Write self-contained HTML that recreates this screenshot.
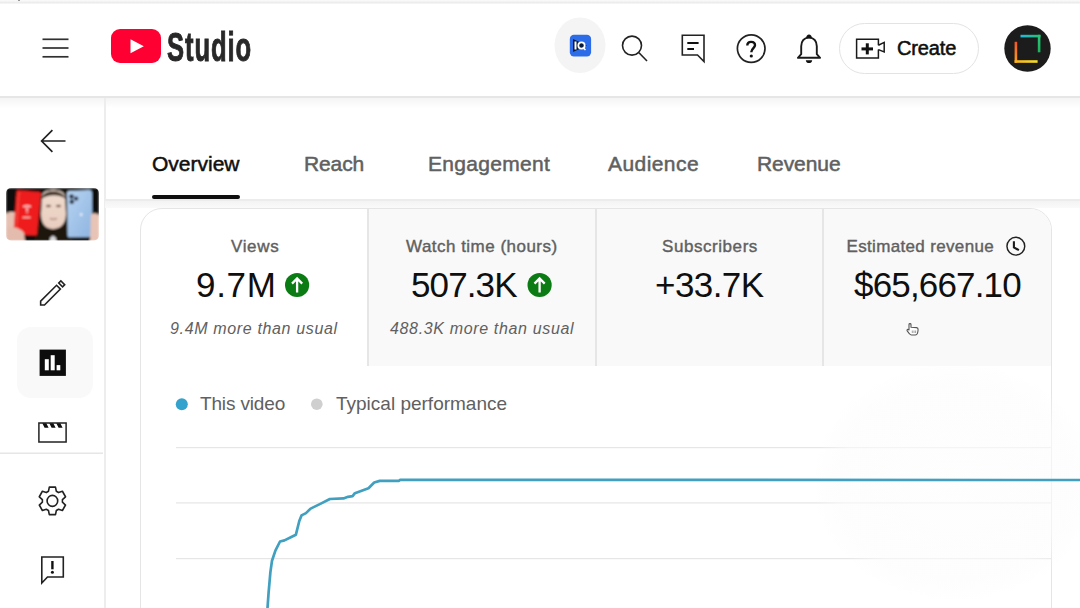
<!DOCTYPE html>
<html><head><meta charset="utf-8">
<style>
*{margin:0;padding:0;box-sizing:border-box}
html,body{width:1080px;height:608px;overflow:hidden;background:#fff;font-family:"Liberation Sans",sans-serif;color:#0f0f0f}
.a{position:absolute}
.t{position:absolute;white-space:nowrap;line-height:1}
#topline{left:0;top:0;width:1080px;height:3.6px;background:linear-gradient(#fbfbfb,#f2f2f2 40%,#ebebeb 70%,#fafafa)}
#hdrline{left:0;top:96px;width:1080px;height:2px;background:#e6e6e6}
#hdrshadow{left:0;top:98px;width:1080px;height:10px;background:linear-gradient(#f4f4f4,rgba(255,255,255,0))}
#sideline{left:103.5px;top:98px;width:2px;height:510px;background:#ededed}
#tabline{left:105px;top:199px;width:975px;height:2px;background:#ececec}
#tabshadow{left:105px;top:201px;width:975px;height:7px;background:linear-gradient(#f3f3f3,#fafafa)}
.tab{font-size:21px;color:#606060;-webkit-text-stroke:0.5px currentColor;letter-spacing:0px}
.lbl{font-size:17px;color:#606060;-webkit-text-stroke:0.4px currentColor;letter-spacing:0.2px}
.big{font-size:35px;color:#0f0f0f}
.sub{font-size:16px;color:#606060;font-style:italic;letter-spacing:0.65px}
.leg{font-size:19px;color:#606060}
</style></head><body>
<div class="a" id="topline"></div>
<div class="a" style="left:18.2px;top:0;width:2.2px;height:1.4px;background:#999"></div>

<!-- header -->
<svg class="a" style="left:0;top:0" width="1080" height="96">
  <g stroke="#303030" stroke-width="1.7" fill="none">
    <line x1="42.5" y1="39.3" x2="68.5" y2="39.3"/>
    <line x1="42.5" y1="48" x2="68.5" y2="48"/>
    <line x1="42.5" y1="56.8" x2="68.5" y2="56.8"/>
  </g>
  <rect x="111" y="29" width="50" height="34" rx="9" fill="#ff0033"/>
  <path d="M130.5 39.3 L143.8 46.3 L130.5 53.3 Z" fill="#fff"/>
  <!-- IQ -->
  <ellipse cx="580" cy="45.3" rx="25.5" ry="27.8" fill="#f4f4f4"/>
  <rect x="569.8" y="34.7" width="21.3" height="21.8" rx="4.2" fill="#2c6ce8"/>
  <path d="M573 39 L587 45.5 L573 52 Z" fill="#0a1a3a"/>
  <rect x="574.5" y="41.5" width="2" height="8" fill="#fff"/>
  <circle cx="581.5" cy="45.5" r="3.2" fill="none" stroke="#fff" stroke-width="1.8"/>
  <line x1="583" y1="47.5" x2="585.5" y2="50" stroke="#fff" stroke-width="1.5"/>
  <!-- search -->
  <circle cx="632" cy="45.6" r="9.5" fill="none" stroke="#222" stroke-width="1.6"/>
  <line x1="639" y1="52.8" x2="647" y2="61" stroke="#222" stroke-width="1.6"/>
  <!-- feedback -->
  <path d="M682.3 35.2 H704 V61.5 L697.5 55 H682.3 Z" fill="none" stroke="#222" stroke-width="1.6" stroke-linejoin="miter"/>
  <line x1="687.3" y1="43" x2="698.6" y2="43" stroke="#111" stroke-width="2"/>
  <line x1="687.3" y1="49" x2="694" y2="49" stroke="#111" stroke-width="2"/>
  <!-- help -->
  <circle cx="751.2" cy="48.6" r="13.8" fill="none" stroke="#222" stroke-width="1.7"/>
  <path d="M747.3 45.6 C747.3 43 749 41.9 751.1 41.9 C753.4 41.9 755 43.2 755 45.3 C755 47.9 751.6 48.4 751.4 51.8 V52.3" fill="none" stroke="#111" stroke-width="2.4"/>
  <circle cx="751.3" cy="56" r="1.6" fill="#111"/>
  <!-- bell -->
  <path d="M809 37.6 C803.8 37.6 801.2 41.7 801.2 46.2 V54.2 L797.9 57.8 H820.1 L816.8 54.2 V46.2 C816.8 41.7 814.2 37.6 809 37.6 Z" fill="none" stroke="#1a1a1a" stroke-width="1.9" stroke-linejoin="round"/>
  <path d="M806.2 38.2 C806 33.4 812 33.4 811.8 38.2 Z" fill="#111"/>
  <path d="M805.8 60.2 C806 64 812 64 812.2 60.2 Z" fill="#111"/>
  <!-- create -->
  <rect x="839.5" y="23.5" width="139" height="50" rx="25" fill="#fff" stroke="#e3e3e3" stroke-width="1"/>
  <path d="M878.4 45.2 V39.2 H856.6 V58 H878.4 V49.6" fill="none" stroke="#1a1a1a" stroke-width="1.5"/>
  <path d="M878.4 45.2 L884.2 42.4 V52 L878.4 49.6" fill="none" stroke="#1a1a1a" stroke-width="1.5" stroke-linejoin="miter"/>
  <line x1="861.5" y1="48.9" x2="873" y2="48.9" stroke="#111" stroke-width="3"/>
  <line x1="867.3" y1="43.3" x2="867.3" y2="54.4" stroke="#111" stroke-width="3"/>
  <!-- avatar -->
  <defs>
    <linearGradient id="g1" x1="0" y1="0" x2="1" y2="0"><stop offset="0" stop-color="#22b8e0"/><stop offset="1" stop-color="#1fc46a"/></linearGradient>
    <linearGradient id="g2" x1="0" y1="0" x2="0" y2="1"><stop offset="0" stop-color="#2bc77a"/><stop offset="1" stop-color="#1db35a"/></linearGradient>
    <linearGradient id="g3" x1="0" y1="0" x2="0" y2="1"><stop offset="0" stop-color="#f2542a"/><stop offset="1" stop-color="#f7a31f"/></linearGradient>
    <linearGradient id="g4" x1="0" y1="0" x2="1" y2="0"><stop offset="0" stop-color="#f8b11e"/><stop offset="1" stop-color="#f3df2a"/></linearGradient>
  </defs>
  <circle cx="1027.5" cy="48.5" r="23.2" fill="#1c1c1c"/>
  <rect x="1020.5" y="34.8" width="20" height="2.6" fill="url(#g1)"/>
  <rect x="1037.8" y="34.8" width="2.6" height="17.5" fill="url(#g2)"/>
  <rect x="1014.6" y="41.8" width="2.6" height="21" fill="url(#g3)"/>
  <rect x="1014.6" y="60.2" width="23" height="2.6" fill="url(#g4)"/>
</svg>
<div class="t" id="studio" style="left:167px;top:27px;font-size:40px;font-weight:bold;color:#282828;transform:scaleX(0.64);transform-origin:0 0;letter-spacing:1.4px;-webkit-text-stroke:0.9px #282828">Studio</div>
<div class="t" id="create" style="left:897px;top:38px;font-size:20px;color:#0f0f0f;-webkit-text-stroke:0.55px currentColor;letter-spacing:-0.15px">Create</div>

<div class="a" id="hdrline"></div>
<div class="a" id="hdrshadow"></div>
<div class="a" id="sideline"></div>

<!-- sidebar -->
<svg class="a" style="left:0;top:97px" width="103" height="511">
  <g transform="translate(0,-97)">
  <path d="M52.4 130.2 L41.6 141 L52.4 151.8 M41.6 141 H65.5" fill="none" stroke="#222" stroke-width="1.7"/>
  <!-- pencil -->
  <g transform="translate(40.65,305) rotate(-45)" fill="none" stroke="#222" stroke-width="1.6" stroke-linejoin="miter">
    <path d="M0 0 L2.7 -2.7 H25.2 V2.7 H2.7 Z"/>
    <rect x="28.3" y="-2.7" width="3" height="5.4"/>
  </g>
  <rect x="17" y="327" width="76" height="71" rx="14" fill="#f9f9f9"/>
  <rect x="39.6" y="349.6" width="26.3" height="26.3" fill="#0d0d0d"/>
  <rect x="44.8" y="359.2" width="4" height="11.1" fill="#fff"/>
  <rect x="50.7" y="355.2" width="4" height="15.1" fill="#fff"/>
  <rect x="56.6" y="365.1" width="3.7" height="5.2" fill="#fff"/>
  <!-- clapper -->
  <rect x="38.9" y="423" width="27.2" height="19" fill="none" stroke="#222" stroke-width="1.5"/>
  <path d="M42.3 423.3 H46.3 L48.6 427.8 H44.6 Z M49.3 423.3 H53.3 L55.6 427.8 H51.6 Z M56.3 423.3 H60.3 L62.6 427.8 H58.6 Z" fill="#111"/>
  <rect x="0" y="452.5" width="103" height="1.5" fill="#e6e6e6"/>
  <!-- gear -->
  <g transform="translate(52.4,500.9) scale(1,1.03)" fill="none" stroke="#222" stroke-width="1.6" stroke-linejoin="round">
    <path d="M-3.95 -9.30 L-3.08 -13.35 L3.08 -13.35 L3.95 -9.30 L6.08 -8.07 L10.02 -9.34 L13.10 -4.01 L10.02 -1.23 L10.02 1.23 L13.10 4.01 L10.02 9.34 L6.08 8.07 L3.95 9.30 L3.08 13.35 L-3.08 13.35 L-3.95 9.30 L-6.08 8.07 L-10.02 9.34 L-13.10 4.01 L-10.02 1.23 L-10.02 -1.23 L-13.10 -4.01 L-10.02 -9.34 L-6.08 -8.07 Z"/>
    <circle r="5.3"/>
  </g>
  <!-- report -->
  <path d="M41.8 557 H63.3 V577 H47.5 L41.8 583 Z" fill="none" stroke="#222" stroke-width="1.6"/>
  <line x1="52.4" y1="561" x2="52.4" y2="569.3" stroke="#111" stroke-width="2.4"/>
  <circle cx="52.4" cy="572.3" r="1.5" fill="#111"/>
  </g>
</svg>

<!-- thumbnail -->
<svg class="a" style="left:6px;top:188px" width="93" height="53" viewBox="6 188 93 53">
  <defs>
    <clipPath id="tc"><rect x="6" y="188" width="93" height="52.5" rx="5"/></clipPath>
    <filter id="bl" x="-10%" y="-10%" width="120%" height="120%"><feGaussianBlur stdDeviation="1"/></filter>
    <linearGradient id="fr" x1="0" y1="0" x2="0" y2="1"><stop offset="0" stop-color="#efdccf"/><stop offset="1" stop-color="#e9cdbd"/></linearGradient>
    <linearGradient id="ph" x1="0" y1="0" x2="1" y2="1"><stop offset="0" stop-color="#b8d4f2"/><stop offset="1" stop-color="#8db4e0"/></linearGradient>
  </defs>
  <g clip-path="url(#tc)" filter="url(#bl)">
    <rect x="6" y="188" width="93" height="53" fill="#111"/>
    <!-- left hand -->
    <path d="M6 214 C9 211 14 211 18 214 L20 241 H6 Z" fill="#e6c0b2"/>
    <!-- clothing -->
    <path d="M34 241 L36 226 C42 222 62 222 70 226 L72 241 Z" fill="#1a1411"/>
    <path d="M50 238 L53 235.5 L56 238 V241 H50 Z" fill="#d8d8d8"/>
    <!-- face -->
    <path d="M42 196 C42 188 64 188 65 196 L66 214 C66 224 60 229 53 229 C46 229 41 224 41 214 Z" fill="url(#fr)"/>
    <path d="M41.5 199 C42 188.5 64 188.5 65.5 199 C60 194 48 194 41.5 199 Z" fill="#3e2e24"/>
    <ellipse cx="48.5" cy="206" rx="2.6" ry="1.3" fill="#7a5a4c"/>
    <ellipse cx="58.5" cy="206" rx="2.6" ry="1.3" fill="#7a5a4c"/>
    <path d="M50 218.5 Q53 220 57 218.5" stroke="#9a6a60" stroke-width="1.2" fill="none"/>
    <!-- red phone -->
    <path d="M18.5 190.2 L39.5 192 C40.5 192.1 41 193 41 194 L37 234 C36.9 235 36 235.6 35 235.5 L14.8 234.3 C13.8 234.2 13.3 233.4 13.4 232.4 L16.5 191.8 C16.6 190.8 17.5 190.1 18.5 190.2 Z" fill="#ee1b1b"/>
    <path d="M18 192 L20 192.2 L17 232 L15 231.8 Z" fill="#f04a40" opacity="0.8"/>
    <path d="M23 206 Q27 204.5 31 206 L30.5 207 Q27 206 23.5 207 Z M26.2 207.5 L27.8 207.5 L27.3 214 L26.8 214 Z" fill="#fff"/>
    <rect x="22.5" y="216.8" width="8" height="1.2" fill="#f7c8c0"/>
    <!-- hand bottom over red phone -->
    <path d="M6 228 C12 225 22 229 24 233 L25 241 H6 Z" fill="#e4bcae"/>
    <!-- blue phone -->
    <path d="M69 191 L89 190 C91 190 92 191 92 193 L92.5 234.5 C92.5 236 91.5 237 90 237 L70 237.3 C68.5 237.3 67.5 236.5 67.5 235 L67 193 C67 191.8 68 191 69 191 Z" fill="url(#ph)"/>
    <circle cx="71.5" cy="196.5" r="2.3" fill="#1a2438"/>
    <circle cx="76.2" cy="198.6" r="2.1" fill="#1a2438"/>
    <circle cx="71.8" cy="201.8" r="2.3" fill="#1a2438"/>
    <path d="M80 214.5 C80 212.5 82.5 212.5 82.5 214.5 C82.5 216.5 80 216.5 80 214.5 Z" fill="#e8f0fa"/>
    <!-- right hand -->
    <path d="M91 214 C95 212 99 214 99 216 V241 H90 Z" fill="#e8c4b6"/>
      </g>
</svg>

<!-- tabs -->
<div class="t tab" id="tab0" style="left:152px;top:153px;color:#0f0f0f">Overview</div>
<div class="t tab" id="tab1" style="left:304px;top:153px;letter-spacing:-0.12px">Reach</div>
<div class="t tab" id="tab2" style="left:428px;top:153px;letter-spacing:0.3px">Engagement</div>
<div class="t tab" id="tab3" style="left:608px;top:153px;letter-spacing:0.43px">Audience</div>
<div class="t tab" id="tab4" style="left:757px;top:153px;letter-spacing:-0.08px">Revenue</div>
<div class="a" style="left:152px;top:195px;width:88px;height:3.5px;border-radius:2px;background:#0f0f0f"></div>
<div class="a" id="tabline"></div>
<div class="a" id="tabshadow"></div>

<!-- card -->
<div class="a" style="left:140px;top:208px;width:912px;height:420px;border:1.5px solid #e5e5e5;border-radius:22px 22px 0 0;overflow:hidden;background:#fff">
  <div class="a" style="left:226px;top:0;width:684px;height:157px;background:#f9f9f9"></div>
  <div class="a" style="left:226px;top:0;width:1.5px;height:157px;background:#e6e6e6"></div>
  <div class="a" style="left:454px;top:0;width:1.5px;height:157px;background:#e6e6e6"></div>
  <div class="a" style="left:681px;top:0;width:1.5px;height:157px;background:#e6e6e6"></div>
</div>

<div class="t lbl" style="left:231px;top:237.5px;letter-spacing:0.65px">Views</div>
<div class="t big" style="left:196px;top:266.5px;letter-spacing:0.67px">9.7M</div>
<div class="t sub" style="left:170px;top:321px">9.4M more than usual</div>
<div class="t lbl" style="left:406px;top:237.5px;letter-spacing:0.48px">Watch time (hours)</div>
<div class="t big" style="left:411px;top:266.5px;letter-spacing:-0.88px">507.3K</div>
<div class="t sub" style="left:390px;top:321px">488.3K more than usual</div>
<div class="t lbl" style="left:662px;top:237.5px;letter-spacing:0.56px">Subscribers</div>
<div class="t big" style="left:655px;top:266.5px;letter-spacing:-0.56px">+33.7K</div>
<div class="t lbl" style="left:846.5px;top:237.5px;letter-spacing:0.34px">Estimated revenue</div>
<div class="t big" style="left:854px;top:266.5px;letter-spacing:-0.84px">$65,667.10</div>

<svg class="a" style="left:0;top:0" width="1080" height="608">
  <g>
    <circle cx="297.1" cy="285" r="12.1" fill="#0b7c13"/>
    <path d="M297.1 292.6 V279 M292 283.6 L297.1 278.5 L302.2 283.6" fill="none" stroke="#fff" stroke-width="2.3"/>
    <circle cx="539.6" cy="285" r="12.1" fill="#0b7c13"/>
    <path d="M539.6 292.6 V279 M534.5 283.6 L539.6 278.5 L544.7 283.6" fill="none" stroke="#fff" stroke-width="2.3"/>
  </g>
  <circle cx="1015.85" cy="246.2" r="8.9" fill="none" stroke="#222" stroke-width="1.45"/>
  <path d="M1013.9 241.2 V247.3 L1018.9 250.2" fill="none" stroke="#1a1a1a" stroke-width="2.1"/>
  <!-- cursor -->
  <path d="M909 324.5 C909 323.3 911 323.3 911 324.5 V327.3 L916.5 327.6 C917.6 327.7 918.2 328.6 918.1 329.8 L917.8 332 C917.5 334 916.5 335 915.3 335 H911.5 C910.5 335 910 334.5 909.5 333.8 L907.2 330.8 C906.6 330 907.5 329 908.3 329.5 L909 330 Z" fill="#fff" stroke="#555" stroke-width="1.1" stroke-linejoin="round"/>
  <path d="M912.3 330.5 V333 M914 330.5 V333 M915.6 330.5 V333" stroke="#777" stroke-width="0.7"/>
  <!-- legend -->
  <circle cx="181.8" cy="404.2" r="6" fill="#33a2cc"/>
  <circle cx="316.8" cy="404.2" r="5.8" fill="#cfcfcf"/>
  <!-- grid -->
  <defs>
    <radialGradient id="fog" cx="0.5" cy="0.5" r="0.5">
      <stop offset="0" stop-color="#fdfdfd" stop-opacity="0.65"/>
      <stop offset="0.8" stop-color="#fcfcfc" stop-opacity="0.6"/>
      <stop offset="1" stop-color="#fafafa" stop-opacity="0"/>
    </radialGradient>
  </defs>
  <g fill="#e6e6e6">
    <rect x="176" y="447" width="875" height="1.2"/>
    <rect x="176" y="502.3" width="875" height="1.2"/>
    <rect x="176" y="558" width="875" height="1.2"/>
  </g>
  <ellipse cx="955" cy="482" rx="142" ry="120" fill="url(#fog)"/>
  <path d="M267.5 608 L268.6 592.6 L270.4 572.1 L272 560.8 L275.4 550.6 L280 541.5 L284.5 540.4 L291.3 537 L295.9 534.7 L299.3 521 L301.5 515.4 L306 513.1 L310.6 508.6 L320.8 503.6 L329.9 499 L343.5 498.4 L348 496.8 L352.6 496.1 L354.9 493.2 L368.5 488.2 L374.2 482.5 L379.8 480.9 L399 480.9 L400 479.8 L1080 480" fill="none" stroke="#41a0c0" stroke-width="2.7" stroke-linejoin="round"/>
</svg>
<div class="t leg" style="left:200px;top:394px;letter-spacing:-0.15px">This video</div>
<div class="t leg" style="left:336px;top:394px">Typical performance</div>
</body></html>
